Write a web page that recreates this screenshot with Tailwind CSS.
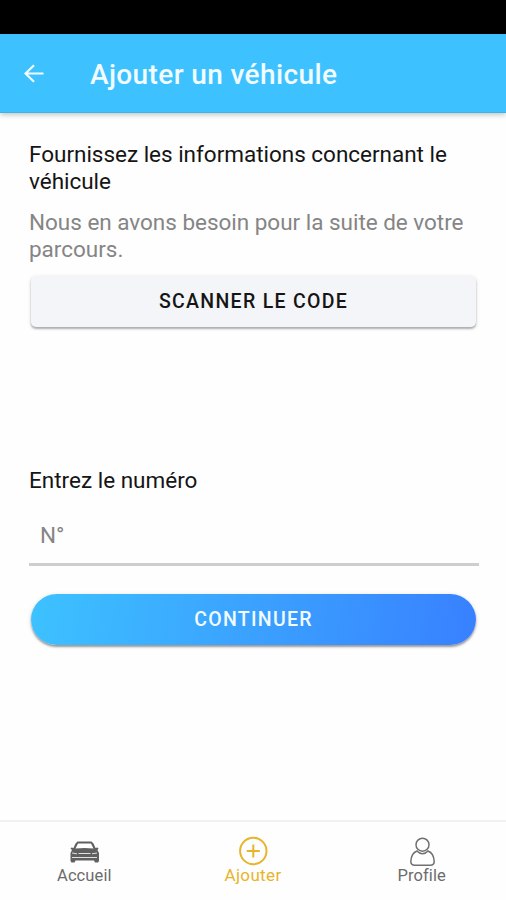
<!DOCTYPE html>
<html lang="fr">
<head>
<meta charset="utf-8">
<title>Ajouter un véhicule</title>
<script src="https://cdn.jsdelivr.net/npm/@tailwindcss/browser@4"></script>
</head>
<body class="bg-white">
<div class="flex h-[900px] w-[506px] flex-col overflow-hidden bg-[#fefefe] font-['Roboto','Liberation_Sans',sans-serif] text-[#151515]">
  <div class="h-[34px] shrink-0 bg-black"></div>
  <header class="z-10 flex h-[79px] shrink-0 items-center border-b border-[#35b5ea] bg-[#3dc2ff] pt-[2px] pl-6 text-[#f2fbff] shadow-[0_2px_5px_rgba(0,0,0,0.22)]">
    <svg class="h-5 w-5" viewBox="0 0 20 20" fill="none" stroke="currentColor" stroke-width="2.200"><path d="M19.500 9.500H1.500M10 1.200L1.500 9.500l8.500 8.300"/></svg>
    <h1 class="ml-[46px] pt-px text-[28px] leading-8 font-medium tracking-[0.38px] whitespace-nowrap">Ajouter un véhicule</h1>
  </header>
  <main class="flex grow flex-col pt-7 pr-[27px] pl-[29px]">
    <p class="text-[22.5px] leading-[27px] tracking-[-0.02px] whitespace-nowrap">Fournissez les informations concernant le<br>véhicule</p>
    <p class="mt-[14px] text-[22.5px] leading-[27px] tracking-[-0.02px] whitespace-nowrap text-[#858585]">Nous en avons besoin pour la suite de votre<br>parcours.</p>
    <button class="mr-[3px] ml-[2px] mt-[13px] h-[51px] shrink-0 rounded-[5px] bg-[#f4f5f9] text-[19.5px] font-medium tracking-[1.3px] shadow-[0_2px_2px_rgba(0,0,0,0.26),0_1px_4px_rgba(0,0,0,0.12)]">SCANNER LE CODE</button>
    <label class="mt-[140px] text-[22.5px] leading-[27px]" for="numero">Entrez le numéro</label>
    <input id="numero" class="mt-[14px] h-[58px] shrink-0 border-b-[3px] border-[#cccfcd] pt-0 pb-[2px] pl-[11px] text-[22.5px] placeholder:text-[#858585]" placeholder="N°">
    <button class="mr-[3px] ml-[2px] mt-[28px] h-[51px] shrink-0 rounded-full bg-[linear-gradient(100deg,#3dc2ff,#3880ff)] text-[19.5px] font-medium tracking-[1.3px] text-[#f2fbff] shadow-[0_2px_2px_rgba(0,0,0,0.32),0_1px_4px_rgba(0,0,0,0.16)]">CONTINUER</button>
  </main>
  <nav class="grid h-[80px] shrink-0 grid-cols-3 border-t-2 border-[#f1f1f1] pt-[14px] text-[16.5px] leading-5 tracking-[0.1px] text-[#6c6c6c]">
    <a class="flex flex-col items-center">
      <svg class="h-[30px] w-8" viewBox="0 0 32 30"><path fill="#606060" fill-rule="evenodd" d="M9.500 5.500h14l2 2 2 4.500 2-.5 1 1L29.500 14l1.500 3v8l-1 1.500h-3l-1-2H7.500l-1 2h-3l-1-1.500v-8L4 14l-1.500-1.500 1-1 2 .5 2-4.500zM10 7.500l-2.500 5 9-.5 9 .5-2.500-5z"/><path fill="none" stroke="#e1e1e1" d="M4 17l5 .8M29 17l-5 .8M10.500 17.500h12M4 21.500h25"/></svg>
      <span>Accueil</span>
    </a>
    <a class="flex flex-col items-center text-[17px] leading-[18px] tracking-[0.35px] text-[#e7b52b]">
      <svg class="h-[30px] w-[30px]" viewBox="0 0 30 30" fill="none" stroke="currentColor" stroke-width="2"><circle cx="15.300" cy="15" r="13.200"/><path d="M15.300 8.500v13M8.800 15h13"/></svg>
      <span>Ajouter</span>
    </a>
    <a class="flex flex-col items-center">
      <svg class="h-[30px] w-[30px]" viewBox="0 0 30 30" fill="none" stroke="#707070" stroke-width="1.500"><circle cx="15.500" cy="8.700" r="6.500"/><path d="M10 15C6 16.500 4 20 3.800 25.500q0 3.700 4 3.700h15.400q4 0 4-3.700C27 20 25 16.500 21 15 18 18.500 13 18.500 10 15z"/></svg>
      <span>Profile</span>
    </a>
  </nav>
</div>
</body>
</html>
